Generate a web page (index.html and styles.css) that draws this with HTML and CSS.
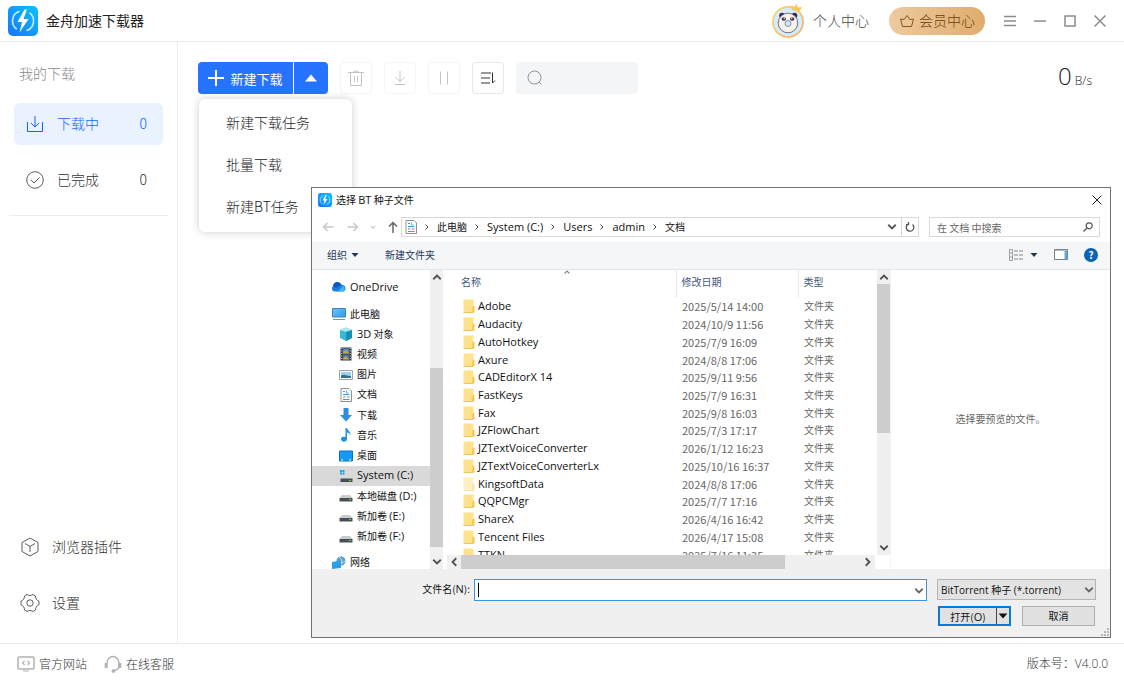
FILE: index.html
```html
<!DOCTYPE html>
<html lang="zh-CN">
<head>
  <meta charset="UTF-8">
  <meta name="viewport" content="width=device-width, initial-scale=1.0">
  <title>金舟加速下载器</title>
  <link rel="stylesheet" href="styles.css">
</head>
<body>
  <svg class="defs" width="0" height="0">
    <defs>
      <linearGradient id="logoFill" x1="1" y1="0" x2="0" y2="1">
        <stop offset="0" stop-color="#08c4ff"/>
        <stop offset="1" stop-color="#1775ff"/>
      </linearGradient>
      <linearGradient id="ringFill" x1="0" y1="0" x2="1" y2="1">
        <stop offset="0" stop-color="#f7d774"/>
        <stop offset="1" stop-color="#f8b26a"/>
      </linearGradient>
      <linearGradient id="screenFill" x1="0" y1="0" x2="1" y2="1">
        <stop offset="0" stop-color="#6cc5fb"/>
        <stop offset="1" stop-color="#2a9af0"/>
      </linearGradient>
      <symbol id="logo" viewBox="0 0 30 30">
        <rect width="30" height="30" rx="5" fill="url(#logoFill)"/>
        <path d="M11.5 5.2a10.2 10.2 0 0 0-2.7 18M18.500 24.600a10.200 10.200 0 0 0 2.900-17.900" fill="none" stroke="#c9ecff" stroke-width="1.600"/>
        <path d="M16.500 3.500 9.500 16h4.500l-2.500 10.500L20.500 13h-5l3.500-9.500z" fill="#fff"/>
      </symbol>
      <symbol id="folder" viewBox="0 0 12 14">
        <path d="M.5.500h10v5.500l1 1V13.500H.500z" fill="#ffe28c"/>
        <path d="M.500 13.500h9.500" stroke="#e9c65c" fill="none"/>
        <path d="M9.500 7h1.800v6.500H9z" fill="#f4c84f"/>
      </symbol>
      <symbol id="doc" viewBox="0 0 12 14">
        <path d="M1 .5h8l2.500 2.500v10.500H1z" fill="#fff" stroke="#8a9299"/>
        <path d="M3 3.500h2M3 6.500h6.500M3 9h2.500M7 9h2.500M3 11.500h6.500" stroke="#3f9bd8"/>
        <path d="M6.500 2.500v2.500h2" fill="none" stroke="#55b4e8"/>
      </symbol>
      <symbol id="drive" viewBox="0 0 14 14">
        <path d="M3 6h8l2.500 3H.500z" fill="#c9cccf"/>
        <path d="M.500 9h13v3.500H.500z" fill="#4a4e52"/>
        <path d="M10 10.500h2" stroke="#4be04b"/>
      </symbol>
      <symbol id="down" viewBox="0 0 8 8">
        <path d="M1.500 2.500 4 5 6.500 2.500" fill="none" stroke="currentColor" stroke-width="1.200"/>
      </symbol>
      <symbol id="next" viewBox="0 0 8 8">
        <path d="M2.500 1.500 5 4 2.500 6.500" fill="none" stroke="currentColor"/>
      </symbol>
      <symbol id="triangle" viewBox="0 0 8 8">
        <path d="M.500 2h7L4 6z" fill="currentColor"/>
      </symbol>
    </defs>
  </svg>

  <div class="app">
    <header class="topbar">
      <svg class="logo"><use href="#logo"/></svg>
      <h1>金舟加速下载器</h1>
      <div class="account">
        <svg width="34" height="36" viewBox="0 0 34 36">
          <circle cx="17" cy="19" r="15" fill="#d4ecfb" stroke="url(#ringFill)" stroke-width="1.800"/>
          <path d="M21 7l-.8-5 3.300 2 2-3.500 1.500 4 4-.5-2.500 5z" fill="#ffc65c"/>
          <circle cx="11" cy="12.500" r="2.800" fill="#3d2755"/>
          <circle cx="23.500" cy="12.500" r="2.800" fill="#3d2755"/>
          <circle cx="17" cy="20" r="9.800" fill="#f8f2e8" stroke="#565273" stroke-width=".8"/>
          <ellipse cx="12.800" cy="16" rx="2.200" ry="1.800" fill="#3d2755"/>
          <ellipse cx="21.200" cy="16" rx="2.200" ry="1.800" fill="#3d2755"/>
          <circle cx="13.200" cy="15.500" r=".7" fill="#fff"/>
          <circle cx="20.800" cy="15.500" r=".7" fill="#fff"/>
          <circle cx="17" cy="20.500" r="3" fill="#cfe8f8" stroke="#6d7a9b" stroke-width=".8"/>
        </svg>
        <a href="#">个人中心</a>
      </div>
      <button class="vip" type="button">
        <svg width="16" height="14" viewBox="0 0 16 14" fill="none" stroke="#87551e">
          <path d="M3.500 12.500 1.500 5l3.700.5L8 1.500l2.800 4 3.700-.5-2 7.500z" stroke-linejoin="round"/>
        </svg>
        <span>会员中心</span>
      </button>
      <div class="window-buttons">
        <button type="button" aria-label="菜单"><svg viewBox="0 0 12 12"><path d="M0 1.500h12M0 6h12M0 10.500h12"/></svg></button>
        <button type="button" aria-label="最小化"><svg viewBox="0 0 12 12"><path d="M0 6h12"/></svg></button>
        <button type="button" aria-label="最大化"><svg viewBox="0 0 12 12"><path d="M1 1h10v10H1z"/></svg></button>
        <button type="button" aria-label="关闭"><svg viewBox="0 0 12 12"><path d="M.500.500l11 11M11.500.500l-11 11"/></svg></button>
      </div>
    </header>

    <div class="body">
      <nav class="sidebar">
        <h2>我的下载</h2>
        <a class="nav-item active" href="#">
          <svg width="18" height="18" viewBox="0 0 18 18" fill="none" stroke="currentColor"><path d="M1.500 7v9.500h15V7M9 1v11M5 8l4 4 4-4"/></svg>
          <span>下载中</span><b>0</b>
        </a>
        <a class="nav-item" href="#">
          <svg width="18" height="18" viewBox="0 0 18 18" fill="none" stroke="currentColor" stroke-width=".8"><circle cx="9" cy="9" r="8.300"/><path d="M5 9l3 3 5.500-5.500"/></svg>
          <span>已完成</span><b>0</b>
        </a>
        <hr>
        <div class="nav-bottom">
          <a class="nav-item" href="#">
            <svg width="20" height="20" viewBox="0 0 20 20" fill="none" stroke="currentColor" stroke-width=".8"><path d="M10 1l8 4.500v9L10 19l-8-4.500v-9zM5 6.500l5 3 5-3M10 9.500V15" stroke-linejoin="round"/></svg>
            <span>浏览器插件</span>
          </a>
          <a class="nav-item" href="#">
            <svg width="20" height="20" viewBox="0 0 20 20" fill="none" stroke="currentColor" stroke-width=".8"><path d="M7 1.500c2 1.300 4 1.300 6 0l2.500 1.500c0 2.500 1.200 4.300 3.500 5.200v3.600c-2.300.9-3.500 2.700-3.500 5.200L13 18.500c-2-1.300-4-1.300-6 0L4.500 17c0-2.500-1.200-4.300-3.500-5.200V8.200C3.300 7.300 4.500 5.500 4.500 3z" stroke-linejoin="round"/><circle cx="10" cy="10" r="3.200"/></svg>
            <span>设置</span>
          </a>
        </div>
      </nav>

      <main class="content">
        <div class="toolbar">
          <div class="new-task">
            <button class="new-main" type="button">
              <svg width="16" height="16" viewBox="0 0 16 16"><path d="M8 0v16M0 8h16" stroke="#fff" stroke-width="2"/></svg>
              新建下载
            </button>
            <button class="new-more" type="button" aria-label="更多">
              <svg width="12" height="8" viewBox="0 0 12 8"><path d="M0 7.500 6 .500l6 7z" fill="#fff"/></svg>
            </button>
            <ul class="menu">
              <li><a href="#">新建下载任务</a></li>
              <li><a href="#">批量下载</a></li>
              <li><a href="#">新建BT任务</a></li>
            </ul>
          </div>
          <button class="tool" type="button" aria-label="删除"><svg viewBox="0 0 16 16"><path d="M0 2.500h16M2.500 2.500v13h11v-13M5 2.500C5.500.500 10.500.500 11 2.500M6.500 6v6M9.500 6v6"/></svg></button>
          <button class="tool" type="button" aria-label="开始"><svg viewBox="0 0 16 16"><path d="M8 1v10.500M3.500 7.500 8 11.500l4.500-4M3 14.500h10"/></svg></button>
          <button class="tool" type="button" aria-label="暂停"><svg viewBox="0 0 16 16"><path d="M4.500 1.500v13M11.500 1.500v13"/></svg></button>
          <button class="tool sort" type="button" aria-label="排序"><svg viewBox="0 0 16 16"><path d="M1 3h10M1 8h9M1 13h9M12.500 2.500v10.500l2.500-2.500"/></svg></button>
          <label class="search">
            <svg width="16" height="16" viewBox="0 0 16 16" fill="none" stroke="#8f9399"><circle cx="7.500" cy="7.500" r="6.500"/><path d="M12 12l2.500 2.500"/></svg>
            <input type="text" aria-label="搜索">
          </label>
          <p class="speed"><span>0</span> B/s</p>
        </div>
      </main>
    </div>

    <footer class="statusbar">
      <a href="#">
        <svg width="18" height="16" viewBox="0 0 18 16" fill="none" stroke="#b3b3b3"><rect x="1" y="1" width="16" height="12" rx="1" stroke-width="1.500"/><path d="M7.500 5 5.500 7l2 2M10.500 5l2 2-2 2M6 15h6" stroke-width="1.200"/></svg>
        <span>官方网站</span>
      </a>
      <a href="#">
        <svg width="18" height="18" viewBox="0 0 18 18" fill="none" stroke="#b3b3b3"><path d="M3 8a6 6.500 0 0 1 12 0v3c0 2.500-2 4-5 4.500" stroke-width="1.500"/><path d="M2.200 8v5M15.800 8v5" stroke-width="3"/><circle cx="9.500" cy="16" r="1.500" fill="#b3b3b3"/></svg>
        <span>在线客服</span>
      </a>
      <span class="version">版本号：V4.0.0</span>
    </footer>

    <section class="dialog" role="dialog" aria-labelledby="dialogTitle">
      <div class="dialog-title">
        <svg width="14" height="14"><use href="#logo"/></svg>
        <h2 id="dialogTitle">选择 <span class="en">BT</span> 种子文件</h2>
        <button type="button" aria-label="关闭"><svg width="10" height="10" viewBox="0 0 10 10"><path d="M.500.500l9 9M9.500.500l-9 9" stroke="#222"/></svg></button>
      </div>

      <div class="address">
        <div class="arrows">
          <button type="button" aria-label="后退" disabled><svg width="12" height="12" viewBox="0 0 12 12"><path d="M11.500 6H1.500M5.500 2l-4 4 4 4"/></svg></button>
          <button type="button" aria-label="前进" disabled><svg width="12" height="12" viewBox="0 0 12 12"><path d="M.500 6h10M6.500 2l4 4-4 4"/></svg></button>
          <button type="button" aria-label="最近" disabled><svg width="6" height="6" viewBox="0 0 8 8"><path d="M1 2.500l3 3 3-3"/></svg></button>
          <button class="up" type="button" aria-label="向上"><svg width="12" height="12" viewBox="0 0 12 12"><path d="M6 12V1.500M2 5.500l4-4 4 4"/></svg></button>
        </div>
        <div class="path">
          <svg width="12" height="14"><use href="#doc"/></svg>
          <svg class="sep"><use href="#next"/></svg>
          <a class="zh" href="#">此电脑</a>
          <svg class="sep"><use href="#next"/></svg>
          <a href="#">System (C:)</a>
          <svg class="sep"><use href="#next"/></svg>
          <a href="#">Users</a>
          <svg class="sep"><use href="#next"/></svg>
          <a href="#">admin</a>
          <svg class="sep"><use href="#next"/></svg>
          <a class="zh" href="#">文档</a>
          <button class="history" type="button" aria-label="历史"><svg width="12" height="12"><use href="#down"/></svg></button>
          <button class="refresh" type="button" aria-label="刷新"><svg width="10" height="10" viewBox="0 0 10 10" fill="none" stroke="#555" stroke-width="1.300"><path d="M7.500 2.500A3.800 3.800 0 1 1 3 2.200M3.500 0v2.700H1"/></svg></button>
        </div>
        <label class="find">
          <input type="text" placeholder="在 文档 中搜索" aria-label="在 文档 中搜索">
          <svg width="10" height="10" viewBox="0 0 10 10" fill="none" stroke="#555" stroke-width="1.200"><circle cx="6.200" cy="3.800" r="3"/><path d="M4 6 .500 9.500"/></svg>
        </label>
      </div>

      <div class="commands">
        <button type="button">组织 <svg width="8" height="8"><use href="#triangle"/></svg></button>
        <button type="button">新建文件夹</button>
        <div class="views">
          <button type="button" aria-label="更改视图">
            <svg width="14" height="12" viewBox="0 0 14 12" fill="none"><path d="M.500.500h3v11h-3zM.500 4h3M.500 8h3" stroke="#9aa0a6"/><path d="M5 2h4M10 2h4M5 6h4M10 6h4M5 10h4M10 10h4" stroke="#808890"/></svg>
            <svg width="8" height="8"><use href="#triangle"/></svg>
          </button>
          <button type="button" aria-label="预览窗格">
            <svg width="14" height="11" viewBox="0 0 14 11"><path d="M.500.500h13v10H.500z" fill="#fff" stroke="#7a8288"/><path d="M10.500 2h2.500v8h-2.500z" fill="#58aee6"/><path d="M0 1h14" stroke="#7a8288"/></svg>
          </button>
          <button class="help" type="button" aria-label="帮助">?</button>
        </div>
      </div>

      <div class="panes">
        <div class="tree">
          <a class="node" href="#"><svg width="14" height="14" viewBox="0 0 14 14"><path d="M3 11.500a3 3 0 0 1 0-6A4 4 0 0 1 10 5a3.300 3.300 0 0 1 1 6.500z" fill="#1a7fe0"/><path d="M6 11.500 11 6a3 3 0 0 1 0 5.500z" fill="#45b4f5"/><path d="M1 6a4.500 4.500 0 0 1 8.500-1.500L4 8z" fill="#0a58c2"/></svg><span class="en">OneDrive</span></a>
          <a class="node gap" href="#"><svg width="14" height="14" viewBox="0 0 14 14"><path d="M.500 1.500h13v8.500H.500z" fill="url(#screenFill)" stroke="#3b86bd"/><path d="M1 12.500h12" stroke="#86929b"/></svg><span>此电脑</span></a>
          <ul>
            <li><a class="node" href="#"><svg width="14" height="14" viewBox="0 0 14 14"><path d="M1 3l6-2.500L13 3v8l-6 3-6-3z" fill="#3bb9d4"/><path d="M1 3l6-2.500L13 3 7 5z" fill="#a9e9f2"/><path d="M7 5l6-2v8l-6 3z" fill="#1691b5"/></svg><span><span class="en">3D</span> 对象</span></a></li>
            <li><a class="node" href="#"><svg width="14" height="14" viewBox="0 0 14 14"><path d="M1.500.500h11v13h-11z" fill="#363b40"/><path d="M4 1.500h6v5H4z" fill="#4a8ed0"/><path d="M4 7.500h6v5H4z" fill="#3f72a9"/><path d="M4 5l3-2 3 3v.500H4zM4 11l3-2 3 3v.500H4z" fill="#c9a24d"/><path d="M2.800 1v12M11.200 1v12" stroke="#e6e6e6" stroke-dasharray="1 1.500"/></svg><span>视频</span></a></li>
            <li><a class="node" href="#"><svg width="14" height="14" viewBox="0 0 14 14"><path d="M.500 2.500h13v9H.500z" fill="#fff" stroke="#9ca3a8"/><path d="M2 4h10v6H2z" fill="#9bd2f2"/><path d="M2 10V7.500c4-2 6 1 10 .500v2z" fill="#37708c"/></svg><span>图片</span></a></li>
            <li><a class="node" href="#"><svg width="14" height="14"><use href="#doc"/></svg><span>文档</span></a></li>
            <li><a class="node" href="#"><svg width="14" height="14" viewBox="0 0 14 14"><path d="M4.500 0h5v7H13l-6 6.500L1 7h3.500z" fill="#2d8de0"/></svg><span>下载</span></a></li>
            <li><a class="node" href="#"><svg width="14" height="14" viewBox="0 0 14 14"><path d="M6.500 0h1.500c.500 3 4 3 3.500 7.500-.500-2-2-3-3.500-3V11A3 2.500 0 1 1 6.500 9z" fill="#1c93e8"/></svg><span>音乐</span></a></li>
            <li><a class="node" href="#"><svg width="14" height="14" viewBox="0 0 14 14"><path d="M.500 2h13v10H.500z" fill="#169af3" stroke="#0b72bd"/><path d="M2 11h2M10 11h2" stroke="#fff"/></svg><span>桌面</span></a></li>
            <li class="selected"><a class="node" href="#"><svg width="14" height="14" viewBox="0 0 14 14"><path d="M1 1h2v2H1zM3.500 1h2v2h-2zM1 3.500h2v2H1zM3.500 3.500h2v2h-2z" fill="#12a5e8"/><path d="M4 7h7l2.500 3H1.500z" fill="#d9dbdd"/><path d="M1.500 9.500h12V13h-12z" fill="#4a4e52"/><path d="M10 11.500h2" stroke="#4be04b"/></svg><span class="en">System (C:)</span></a></li>
            <li><a class="node" href="#"><svg width="14" height="14"><use href="#drive"/></svg><span>本地磁盘 <span class="en">(D:)</span></span></a></li>
            <li><a class="node" href="#"><svg width="14" height="14"><use href="#drive"/></svg><span>新加卷 <span class="en">(E:)</span></span></a></li>
            <li><a class="node" href="#"><svg width="14" height="14"><use href="#drive"/></svg><span>新加卷 <span class="en">(F:)</span></span></a></li>
          </ul>
          <a class="node last" href="#"><svg width="14" height="14" viewBox="0 0 14 14"><circle cx="9" cy="5" r="4.500" fill="#5b9fc4"/><path d="M7 1l3 3-1 4 4-3" fill="none" stroke="#bde0ef"/><path d="M0 6l9-1.500V12l-9 1z" fill="#2c9fe8"/></svg><span>网络</span></a>
        </div>
        <div class="scroll-y tree-scroll">
          <svg class="flip"><use href="#down"/></svg>
          <div class="track"><i></i></div>
          <svg><use href="#down"/></svg>
        </div>

        <div class="files">
          <div class="files-top">
            <div class="files-list">
              <table>
                <thead>
                  <tr><th class="name">名称<svg class="sort-mark"><use href="#down"/></svg></th><th class="date">修改日期</th><th>类型</th></tr>
                </thead>
                <tbody>
                  <tr><td><svg><use href="#folder"/></svg>Adobe</td><td>2025/5/14 14:00</td><td>文件夹</td></tr>
                  <tr><td><svg><use href="#folder"/></svg>Audacity</td><td>2024/10/9 11:56</td><td>文件夹</td></tr>
                  <tr><td><svg><use href="#folder"/></svg>AutoHotkey</td><td>2025/7/9 16:09</td><td>文件夹</td></tr>
                  <tr><td><svg><use href="#folder"/></svg>Axure</td><td>2024/8/8 17:06</td><td>文件夹</td></tr>
                  <tr><td><svg><use href="#folder"/></svg>CADEditorX 14</td><td>2025/9/11 9:56</td><td>文件夹</td></tr>
                  <tr><td><svg><use href="#folder"/></svg>FastKeys</td><td>2025/7/9 16:31</td><td>文件夹</td></tr>
                  <tr><td><svg><use href="#folder"/></svg>Fax</td><td>2025/9/8 16:03</td><td>文件夹</td></tr>
                  <tr><td><svg><use href="#folder"/></svg>JZFlowChart</td><td>2025/7/3 17:17</td><td>文件夹</td></tr>
                  <tr><td><svg><use href="#folder"/></svg>JZTextVoiceConverter</td><td>2026/1/12 16:23</td><td>文件夹</td></tr>
                  <tr><td><svg><use href="#folder"/></svg>JZTextVoiceConverterLx</td><td>2025/10/16 16:37</td><td>文件夹</td></tr>
                  <tr class="hidden-dir"><td><svg><use href="#folder"/></svg>KingsoftData</td><td>2024/8/8 17:06</td><td>文件夹</td></tr>
                  <tr><td><svg><use href="#folder"/></svg>QQPCMgr</td><td>2025/7/7 17:16</td><td>文件夹</td></tr>
                  <tr><td><svg><use href="#folder"/></svg>ShareX</td><td>2026/4/16 16:42</td><td>文件夹</td></tr>
                  <tr><td><svg><use href="#folder"/></svg>Tencent Files</td><td>2026/4/17 15:08</td><td>文件夹</td></tr>
                  <tr><td><svg><use href="#folder"/></svg>TTKN</td><td>2025/7/16 11:35</td><td>文件夹</td></tr>
                </tbody>
              </table>
            </div>
            <div class="scroll-y list-scroll">
              <svg class="flip"><use href="#down"/></svg>
              <div class="track"><i></i></div>
              <svg><use href="#down"/></svg>
            </div>
          </div>
          <div class="scroll-x">
            <svg class="left"><use href="#down"/></svg>
            <div class="track"><i></i></div>
            <svg class="right"><use href="#down"/></svg>
          </div>
        </div>

        <div class="preview">选择要预览的文件。</div>
      </div>

      <form class="actions">
        <label for="fileName">文件名(<span class="en">N</span>):</label>
        <div class="combo file-name">
          <input type="text" id="fileName">
          <svg><use href="#down"/></svg>
          <i class="caret"></i>
        </div>
        <div class="side">
          <div class="combo file-type">
            <select aria-label="文件类型"><option>BitTorrent 种子 (*.torrent)</option></select>
            <svg><use href="#down"/></svg>
          </div>
          <div class="buttons">
            <div class="open">
              <button type="button">打开(<span class="en">O</span>)</button>
              <button class="open-more" type="button" aria-label="打开方式"><svg width="10" height="10"><use href="#triangle"/></svg></button>
            </div>
            <button class="cancel" type="button">取消</button>
          </div>
        </div>
        <svg class="grip" viewBox="0 0 8 8" fill="#b5b5b5"><path d="M6 0h2v2H6zM3 3h2v2H3zM6 3h2v2H6zM0 6h2v2H0zM3 6h2v2H3zM6 6h2v2H6z"/></svg>
      </form>
    </section>
  </div>
</body>
</html>
```

FILE: styles.css
```css
* {
  box-sizing: border-box;
}
body {
  margin: 0;
  font-family: "Noto Sans CJK SC", sans-serif;
  font-size: 14px;
  font-weight: 300;
  color: #222;
  background: #fff;
}
h1, h2, p, ul, hr {
  margin: 0;
  padding: 0;
}
ul {
  list-style: none;
}
a {
  color: inherit;
  text-decoration: none;
}
button {
  display: flex;
  align-items: center;
  justify-content: center;
  padding: 0;
  border: 0;
  background: none;
  font: inherit;
  color: inherit;
}
input, select {
  min-width: 0;
  padding: 0;
  border: 0;
  outline: 0;
  background: none;
  font: inherit;
  color: inherit;
}
svg {
  flex: none;
}
.defs {
  position: absolute;
}
.app {
  position: relative;
  display: flex;
  flex-direction: column;
  height: 100vh;
  overflow: hidden;
}

/* top bar */
.topbar {
  display: flex;
  align-items: center;
  height: 42px;
  padding: 0 18px 0 8px;
  border-bottom: 1px solid #ececec;
}
.logo {
  width: 30px;
  height: 30px;
}
.topbar h1 {
  margin-left: 8px;
  padding-bottom: 2px;
  font-size: 14px;
  font-weight: 400;
}
.account {
  display: flex;
  align-items: center;
  gap: 8px;
  margin-left: auto;
  color: #444;
}
.account a, .vip span {
  padding-bottom: 2px;
}
.vip {
  gap: 4px;
  width: 96px;
  height: 28px;
  margin: 0 19px 0 20px;
  border-radius: 14px;
  background: linear-gradient(90deg, #edcaa0, #dfad6c);
  color: #6b3e0e;
}
.window-buttons {
  display: flex;
  gap: 18px;
}
.window-buttons svg {
  width: 12px;
  height: 12px;
  fill: none;
  stroke: #8c8c8c;
  stroke-width: 1.5;
}

/* sidebar */
.body {
  display: flex;
  flex: 1;
  min-height: 0;
}
.sidebar {
  display: flex;
  flex-direction: column;
  width: 178px;
  padding: 19px 9px 19px;
  border-right: 1px solid #ececec;
  color: #333;
}
.sidebar h2 {
  margin: 0 10px 18px;
  font-size: 14px;
  font-weight: 300;
  line-height: 24px;
  color: #888;
}
.nav-item {
  display: flex;
  align-items: center;
  gap: 13px;
  height: 42px;
  margin: 0 5px 14px;
  padding: 0 16px 0 12px;
  border-radius: 6px;
}
.nav-item span, .nav-item b {
  padding-bottom: 2px;
}
.nav-item b {
  margin-left: auto;
  font-weight: 300;
}
.nav-item.active {
  background: #e9f3ff;
  color: #1363ff;
}
.sidebar hr {
  height: 1px;
  border: 0;
  background: #ececec;
}
.nav-bottom {
  margin-top: auto;
}
.nav-bottom .nav-item {
  gap: 12px;
  padding-left: 6px;
}
.nav-bottom .nav-item:last-child {
  margin-bottom: 0;
}

/* download toolbar */
.content {
  flex: 1;
  padding: 20px 32px 0 20px;
}
.toolbar {
  display: flex;
  align-items: center;
  gap: 12px;
  height: 32px;
}
.new-task {
  position: relative;
  display: flex;
  gap: 1px;
}
.new-main, .new-more {
  height: 32px;
  background: #2673ff;
  color: #fff;
}
.new-main {
  gap: 6px;
  width: 95px;
  border-radius: 4px 0 0 4px;
  font-size: 13px;
  font-weight: 400;
}
.new-more {
  width: 34px;
  border-radius: 0 4px 4px 0;
}
.menu {
  position: absolute;
  top: 37px;
  left: 1px;
  width: 153px;
  padding: 2px 0 5px;
  border-radius: 6px;
  background: #fff;
  box-shadow: 0 0 8px rgba(0, 0, 0, 0.2);
}
.menu a {
  display: block;
  padding-left: 27px;
  line-height: 42px;
}
.tool {
  width: 32px;
  height: 32px;
  border: 1px solid #f5f5f5;
  border-radius: 4px;
}
.tool svg {
  width: 16px;
  height: 16px;
  fill: none;
  stroke: #c4c4c4;
}
.tool.sort {
  border-color: #e8e8e8;
}
.tool.sort svg {
  stroke: #333;
}
.search {
  display: flex;
  align-items: center;
  width: 122px;
  height: 32px;
  padding: 0 11px;
  border-radius: 4px;
  background: #f4f5f7;
}
.search input {
  flex: 1;
}
.speed {
  margin-left: auto;
  font-family: "Open Sans", sans-serif;
  font-size: 12px;
  line-height: 32px;
}
.speed span {
  font-size: 24px;
}

/* status bar */
.statusbar {
  display: flex;
  align-items: center;
  gap: 17px;
  height: 41px;
  padding: 0 16px 0 17px;
  border-top: 1px solid #ececec;
  font-size: 12px;
  color: #333;
}
.statusbar a {
  display: flex;
  align-items: center;
  gap: 4px;
}
.statusbar span {
  padding-bottom: 2px;
}
.version {
  margin-left: auto;
  font-family: "Open Sans", "Noto Sans CJK SC", sans-serif;
}

/* file dialog */
.dialog {
  position: absolute;
  top: 187px;
  right: 13px;
  bottom: 46px;
  left: 311px;
  display: flex;
  flex-direction: column;
  border: 1px solid #6f7375;
  background: #fff;
  font-size: 10px;
  font-weight: 400;
  color: #111;
}
.en, .path a, .files-list td:first-child {
  font-family: "Open Sans", "Noto Sans CJK SC", sans-serif;
  font-size: 11px;
}
.path .zh {
  font-size: 10px;
}
.dialog-title {
  display: flex;
  align-items: center;
  gap: 4px;
  height: 24px;
  padding: 0 8px 0 6px;
}
.dialog-title h2 {
  flex: 1;
  padding-bottom: 2px;
  font-size: 10px;
  font-weight: 400;
}
.address {
  display: flex;
  align-items: center;
  height: 30px;
  padding: 0 10px;
}
.arrows {
  display: flex;
  gap: 13px;
  width: 79px;
}
.arrows svg {
  fill: none;
  stroke: #c8c8c8;
  stroke-width: 1.5;
}
.arrows button + button + button {
  margin-left: -2px;
}
.arrows .up svg {
  stroke: #666;
}
.path {
  display: flex;
  flex: 1;
  align-items: center;
  height: 20px;
  padding-left: 3px;
  border: 1px solid #d9d9d9;
}
.path a {
  line-height: 18px;
}
.sep {
  width: 8px;
  height: 8px;
  margin: 0 6px;
  color: #444;
}
.history {
  width: 18px;
  height: 18px;
  margin-left: auto;
  color: #555;
}
.refresh {
  width: 17px;
  height: 18px;
  border-left: 1px solid #d9d9d9;
}
.find {
  display: flex;
  align-items: center;
  width: 171px;
  height: 20px;
  margin-left: 10px;
  padding: 0 6px 0 7px;
  border: 1px solid #d9d9d9;
}
.find input {
  flex: 1;
}
.find input::placeholder {
  color: #666;
}
.commands {
  display: flex;
  align-items: center;
  gap: 26px;
  height: 28px;
  padding: 0 12px 2px 15px;
  border-bottom: 1px solid #e3e5e8;
  background: #f5f6f7;
  color: #1e395b;
}
.commands button {
  gap: 4px;
}
.views {
  display: flex;
  align-items: center;
  gap: 16px;
  margin-left: auto;
}
.views button {
  gap: 7px;
}
.views .help {
  width: 14px;
  height: 14px;
  border-radius: 50%;
  background: #0a63b8;
  color: #fff;
  font-weight: 700;
}
.panes {
  display: flex;
  flex: 1;
  min-height: 0;
}
.tree {
  width: 118px;
  padding-top: 7px;
  overflow: hidden;
}
.node {
  display: flex;
  align-items: center;
  gap: 4px;
  height: 20px;
  padding-left: 20px;
  white-space: nowrap;
}
.node > span {
  padding-bottom: 2px;
}
.node.gap {
  margin-top: 7px;
}
.node.last {
  margin-top: 6px;
  line-height: 12px;
}
.tree ul {
  display: grid;
  grid-template-rows: repeat(11, 1fr);
  height: 223px;
}
.tree li .node {
  padding-left: 27px;
}
.tree .selected {
  background: #d9d9d9;
}
.scroll-y, .scroll-x {
  display: flex;
  align-items: center;
  background: #f0f0f0;
  color: #505050;
}
.scroll-y {
  flex-direction: column;
  width: 13px;
}
.scroll-y > svg, .scroll-x > svg {
  width: 12px;
  height: 12px;
  margin: 1px;
}
.flip {
  transform: rotate(180deg);
}
.left {
  transform: rotate(90deg);
}
.right {
  transform: rotate(-90deg);
}
.track {
  display: flex;
  flex: 1;
  align-self: stretch;
}
.track i {
  background: #cdcdcd;
}
.scroll-y .track i {
  width: 100%;
}
.tree-scroll .track {
  align-items: flex-end;
  padding-bottom: 8px;
}
.tree-scroll .track i {
  height: 68%;
}
.list-scroll .track i {
  height: 58%;
}
.scroll-x {
  width: 428px;
  height: 14px;
  margin-left: 4px;
}
.scroll-x .track i {
  width: 81%;
}
.files {
  display: flex;
  flex: 1;
  flex-direction: column;
  min-width: 0;
}
.files-top {
  display: flex;
  flex: 1;
  min-height: 0;
}
.files-list {
  flex: 1;
  min-width: 0;
  overflow: hidden;
}
.files-list table {
  width: 100%;
  height: 294px;
  border-collapse: collapse;
  table-layout: fixed;
}
.files-list th {
  height: 28px;
  padding: 0 5px 6px;
  text-align: left;
  font-weight: 400;
  color: #43597a;
  border-left: 1px solid #e8e8e8;
}
.files-list th.name {
  position: relative;
  width: 233px;
  padding-left: 18px;
  border: 0;
}
.files-list th.date {
  width: 122px;
}
.sort-mark {
  position: absolute;
  top: -2px;
  left: 119px;
  width: 10px;
  height: 8px;
  color: #888;
  transform: rotate(180deg);
}
.files-list td {
  padding: 0 6px 1px;
  line-height: 16px;
  white-space: nowrap;
  color: #666;
}
.files-list td:first-child {
  padding-left: 20px;
  color: #111;
}
.files-list td:nth-child(2) {
  font-size: 11px;
}
.files-list td svg {
  width: 12px;
  height: 14px;
  margin-right: 3px;
  vertical-align: -3px;
}
.hidden-dir svg {
  opacity: 0.5;
}
.preview {
  display: flex;
  align-items: center;
  justify-content: center;
  width: 220px;
  padding-bottom: 2px;
  border-left: 1px solid #f3f3f3;
  color: #666;
}
.actions {
  position: relative;
  display: flex;
  align-items: flex-start;
  height: 68px;
  padding: 10px 14px 0 0;
  background: #f0f0f0;
}
.actions label {
  width: 162px;
  padding-right: 4px;
  line-height: 20px;
  text-align: right;
}
.combo {
  position: relative;
  display: flex;
}
.combo svg {
  position: absolute;
  top: 5px;
  right: 1px;
  width: 12px;
  height: 12px;
  color: #666;
  pointer-events: none;
}
.file-name {
  flex: 1;
  height: 22px;
  border: 1px solid #3b93dc;
  background: #fff;
}
.file-name input {
  flex: 1;
  padding: 0 16px 0 4px;
}
.caret {
  position: absolute;
  top: 3px;
  left: 3px;
  width: 1px;
  height: 14px;
  background: #000;
}
.side {
  width: 159px;
  margin-left: 10px;
}
.file-type select {
  flex: 1;
  height: 21px;
  padding-left: 3px;
  border: 1px solid #b4b4b4;
  background: #e3e3e3;
  font-family: "Open Sans", "Noto Sans CJK SC", sans-serif;
  appearance: none;
}
.buttons {
  display: flex;
  justify-content: space-between;
  margin-top: 6px;
  padding: 0 1px;
}
.open, .cancel {
  width: 73px;
  height: 20px;
  background: #e1e1e1;
}
.open {
  display: flex;
  border: 2px solid #0a7ad8;
}
.open button:first-child {
  flex: 1;
}
.open-more {
  width: 13px;
  border-left: 1px solid #444;
}
.cancel {
  padding-bottom: 2px;
  border: 1px solid #adadad;
}
.grip {
  position: absolute;
  right: 1px;
  bottom: 1px;
  width: 8px;
  height: 8px;
}
```
